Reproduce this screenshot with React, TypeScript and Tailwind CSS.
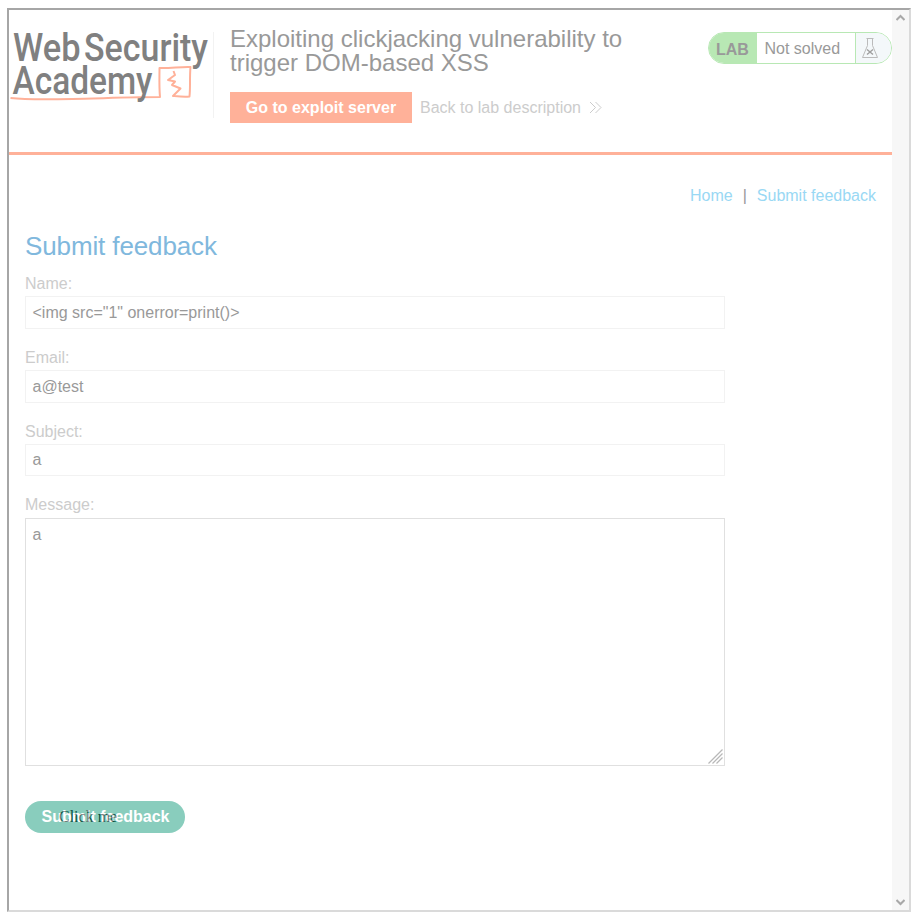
import React from 'react';

function Logo() {
  return (
    <svg width="202" height="80" viewBox="0 0 202 80" className="block shrink-0 overflow-visible" fontFamily="Roboto, sans-serif" fontWeight="500" fontSize="38" fill="#808080">
      <path d="M-.500 66 C22 68.500 50 67 82 66.500 C110 65.500 130 65 149 65 C148 54 148.500 45 148.500 36 C159 36.500 170 34.500 179.500 35 C178.500 46 179.500 55 178.500 64.500 C173 65 168 64.500 162 64 L169.500 56.500 L161 53 L164 49.500 L157 48 L164 43 L162.500 39" fill="none" stroke="#ffb199" strokeWidth="2" strokeLinejoin="round" />
      <text x="2" y="28.500" textLength="67.500" lengthAdjust="spacingAndGlyphs">Web</text>
      <text x="73" y="28.500" textLength="124" lengthAdjust="spacingAndGlyphs">Security</text>
      <text x="1.500" y="61.500" textLength="140" lengthAdjust="spacingAndGlyphs">Academy</text>
    </svg>
  );
}

function LabStatus() {
  return (
    <div className="flex h-8 w-[184px] shrink-0 overflow-hidden rounded-full border border-[#b8e8b4] bg-white text-base leading-[31px] text-[#999]">
      <span className="w-12 bg-[#b8e8b4] pl-[7px] pt-px font-bold">LAB</span>
      <span className="w-[98px] pl-[7.5px]">Not solved</span>
      <span className="flex-1 border-l border-[#b8e8b4] bg-[#f4f8fa]">
        <svg width="18" height="22" viewBox="0 0 18 22" className="ml-[5px] mt-[5px]" fill="none" stroke="#bbb">
          <path d="M5.500 .5h7M6.500 1v6.500L1.500 19.500h15L11.500 7.500V1" />
          <path d="M6 11.500l6 5M12 11.500l-6 5" stroke="#a0a0a0" strokeWidth="1.500" />
        </svg>
      </span>
    </div>
  );
}

function Field({ label, value, short }: { label: string; value: string; short?: boolean }) {
  return (
    <label className={short ? 'block h-[73px]' : 'block h-[74px]'}>
      <span className="block h-[22px] leading-5 text-[#ccc]">{label}</span>
      <span className={(short ? 'h-8 leading-[29px]' : 'h-[33px] leading-[31px]') + ' block w-[700px] border border-[#f2f2f2] pl-[6.5px] text-[#999]'}>{value}</span>
    </label>
  );
}

export default function App() {
  return (
    <div className="h-[917px] w-[921px] overflow-hidden bg-white pl-[7px] pt-2 font-['Liberation_Sans',Arial,sans-serif] text-base">
      <div className="flex h-[904px] w-[904px] border-2 border-b-[#dadada] border-l-[#a6a6a6] border-r-[#dadada] border-t-[#a6a6a6]">
        <main className="w-[883px]">
          <header className="flex h-[145px] border-b-[3px] border-[#ffb199] pt-[22px]">
            <div className="flex h-[86px] w-[205px] border-r border-[#f2f2f2] pl-0.5">
              <Logo />
            </div>
            <div className="w-[478px] pl-4">
              <h1 className="-mt-[5px] w-[430px] text-2xl leading-6 text-[#999]">Exploiting clickjacking vulnerability to trigger DOM-based XSS</h1>
              <div className="mt-[17px] flex leading-[31px]">
                <a className="h-[31px] w-[182px] bg-[#ffb199] text-center font-bold text-white">Go to exploit server</a>
                <a className="ml-2 flex text-[#ccc]">
                  Back to lab description
                  <svg width="14" height="13" viewBox="0 0 14 13" className="ml-2 mt-[9px]" fill="none" stroke="#ccc">
                    <path d="M1 1l5.500 5.500L1 12M6.500 1l5.500 5.500L6.500 12" />
                  </svg>
                </a>
              </div>
            </div>
            <div className="ml-4">
              <LabStatus />
            </div>
          </header>
          <nav className="flex h-[76px] justify-end pr-4 pt-8 leading-[18px] text-[#99d8f4]">
            <a>Home</a>
            <span className="mx-[10px] text-[#999]">|</span>
            <a>Submit feedback</a>
          </nav>
          <form className="pl-4">
            <h2 className="h-[43px] text-[26px] leading-[30px] tracking-[-0.12px] text-[#80b8dd]">Submit feedback</h2>
            <Field label="Name:" value={'<img src="1" onerror=print()>'} />
            <Field label="Email:" value="a@test" />
            <Field label="Subject:" value="a" short />
            <div className="h-[23px] leading-5 text-[#ccc]">Message:</div>
            <div className="relative h-[248px] w-[700px] border border-[#e0e0e0] pl-[6.5px] pt-[7px] leading-[18px] text-[#999]">
              a
              <svg width="15" height="15" viewBox="0 0 15 15" className="absolute bottom-px right-px" fill="none" stroke="#b8b8b8" strokeWidth="1.300">
                <path d="M.500 14.500L14.500 .5M4.500 14.500l10-10M8.500 14.500l6-6" />
              </svg>
            </div>
            <div className="relative mt-[35px] h-8 w-40">
              <span className="absolute left-[34px] top-[7px] font-['Liberation_Serif',serif] leading-[18px] text-black">Click me</span>
              <div className="relative h-8 rounded-full bg-[#159d7d] pl-px text-center font-bold leading-[31px] text-white opacity-50">Submit feedback</div>
            </div>
          </form>
        </main>
        <aside className="flex w-[17px] flex-col items-center justify-between bg-[#f7f7f7] pb-1 pt-1">
          <svg width="9" height="8" viewBox="0 0 9 8" fill="none" stroke="#a8a8a8" strokeWidth="2"><path d="M.5 6l4-4 4 4" /></svg>
          <svg width="9" height="8" viewBox="0 0 9 8" fill="none" stroke="#a8a8a8" strokeWidth="2"><path d="M.5 2l4 4 4-4" /></svg>
        </aside>
      </div>
    </div>
  );
}
